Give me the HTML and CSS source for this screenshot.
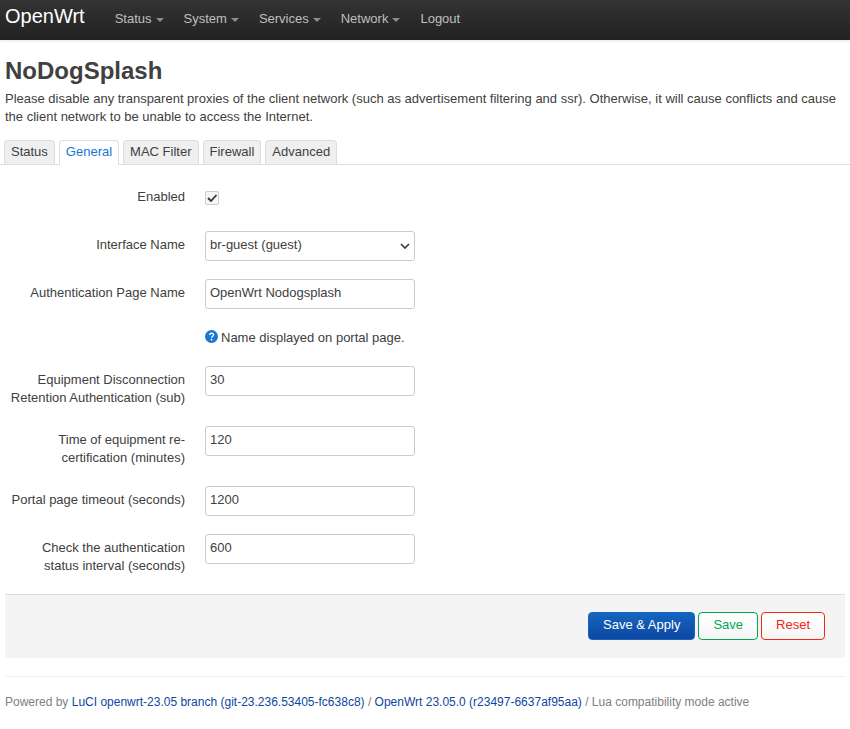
FILE: index.html
```html
<!DOCTYPE html>
<html lang="en">
<head>
<meta charset="utf-8">
<meta name="viewport" content="width=device-width, initial-scale=1">
<title>OpenWrt - NoDogSplash</title>
<link rel="stylesheet" href="styles.css">
</head>
<body>
<header class="topbar">
  <a class="brand" href="#">OpenWrt</a>
  <nav class="nav">
    <a class="menu" href="#">Status</a>
    <a class="menu" href="#">System</a>
    <a class="menu" href="#">Services</a>
    <a class="menu" href="#">Network</a>
    <a href="#">Logout</a>
  </nav>
</header>
<main>
  <h1>NoDogSplash</h1>
  <p class="intro">Please disable any transparent proxies of the client network (such as advertisement filtering and ssr). Otherwise, it will cause conflicts and cause the client network to be unable to access the Internet.</p>
  <nav class="tabs">
    <a href="#">Status</a>
    <a class="active" href="#">General</a>
    <a href="#">MAC Filter</a>
    <a href="#">Firewall</a>
    <a href="#">Advanced</a>
  </nav>
  <form>
    <div class="fields">
      <div class="row">
        <label for="enabled">Enabled</label>
        <div class="value check"><input type="checkbox" id="enabled" checked></div>
      </div>
      <div class="row">
        <label for="iface">Interface Name</label>
        <div class="value"><select class="control" id="iface"><option>br-guest (guest)</option></select></div>
      </div>
      <div class="row">
        <label for="page">Authentication Page Name</label>
        <div class="value">
          <input class="control" type="text" id="page" value="OpenWrt Nodogsplash">
          <div class="hint">
            <svg width="14" height="14" viewBox="0 0 14 14" aria-hidden="true"><circle cx="6.5" cy="6.5" r="6.5" fill="#1976d2"/><path d="M4.7 5.1C4.7 2.6 8.5 2.6 8.5 4.8C8.5 6.2 6.6 6.2 6.6 7.8" fill="none" stroke="#fff" stroke-width="1.4"/><circle cx="6.6" cy="9.7" r=".9" fill="#fff"/></svg>
            <span>Name displayed on portal page.</span>
          </div>
        </div>
      </div>
      <div class="row">
        <label for="retention">Equipment Disconnection Retention Authentication (sub)</label>
        <div class="value"><input class="control" type="text" id="retention" value="30"></div>
      </div>
      <div class="row">
        <label for="recert">Time of equipment re-certification (minutes)</label>
        <div class="value"><input class="control" type="text" id="recert" value="120"></div>
      </div>
      <div class="row">
        <label for="timeout">Portal page timeout (seconds)</label>
        <div class="value"><input class="control" type="text" id="timeout" value="1200"></div>
      </div>
      <div class="row">
        <label for="interval">Check the authentication status interval (seconds)</label>
        <div class="value"><input class="control" type="text" id="interval" value="600"></div>
      </div>
    </div>
    <div class="actions">
      <button class="apply" type="button">Save &amp; Apply</button>
      <button class="save" type="button">Save</button>
      <button class="reset" type="button">Reset</button>
    </div>
  </form>
</main>
<footer>Powered by <a href="#">LuCI openwrt-23.05 branch (git-23.236.53405-fc638c8)</a> / <a href="#">OpenWrt 23.05.0 (r23497-6637af95aa)</a> / Lua compatibility mode active</footer>
</body>
</html>
```
FILE: styles.css
```css
* { box-sizing: border-box; }

body {
  margin: 0;
  background: #fff;
  color: #404040;
  font: 13px/18px "Liberation Sans", Arial, sans-serif;
}

a { color: #0d47a1; text-decoration: none; }

.topbar {
  display: flex;
  height: 40px;
  padding: 0 5px;
  background: linear-gradient(#333, #222);
  box-shadow: 0 1px 3px rgba(0, 0, 0, .1);
}

.brand { padding-right: 20px; color: #fff; font-size: 20px; line-height: 32px; }

.nav { display: flex; }
.nav a { padding: 0 10px; color: #bfbfbf; line-height: 37px; }
.nav .menu::after {
  content: "";
  display: inline-block;
  margin-left: 4px;
  border: 4px solid transparent;
  border-top-color: #8c8c8c;
  border-bottom: 0;
  vertical-align: middle;
}

h1 { margin: 13px 5px 1px; font-size: 24px; line-height: 36px; }
.intro { margin: 0 5px; }

.tabs {
  display: flex;
  gap: 4px;
  margin-top: 14px;
  padding: 0 4px;
  border-bottom: 1px solid #ddd;
}
.tabs a {
  padding: 2px 6px 3px;
  border: 1px solid #ddd;
  border-bottom: 0;
  border-radius: 4px 4px 0 0;
  background: #efefef;
  color: #404040;
}
.tabs .active { margin-bottom: -1px; background: #fff; color: #1976d2; }

.fields {
  display: flex;
  flex-direction: column;
  gap: 18px;
  padding: 18px 5px;
}
.row { display: flex; gap: 20px; min-height: 30px; }
.row > label { flex: 0 0 180px; padding-top: 5px; text-align: right; }
.row:nth-child(n+4) > label { padding-bottom: 1px; }

.control {
  display: block;
  width: 210px;
  height: 30px;
  margin: 0;
  padding: 2px 4px 6px;
  border: 1px solid #ccc;
  border-radius: 3px;
  background: #fff;
  color: #404040;
  font: inherit;
}
select.control {
  appearance: none;
  padding: 3px 4px 5px;
  background: #fff url("data:image/svg+xml,%3Csvg xmlns='http://www.w3.org/2000/svg' width='10' height='8'%3E%3Cpath d='M1 2l4 4 4-4' fill='none' stroke='%23404040' stroke-width='1.7'/%3E%3C/svg%3E") no-repeat right 4px center;
}

.check { padding-top: 8px; }
.check input {
  appearance: none;
  display: block;
  width: 14px;
  height: 14px;
  margin: 0;
  border: 1px solid #ccc;
  border-radius: 2px;
  background: #f6f6f6;
}
.check input:checked {
  background-image: url("data:image/svg+xml,%3Csvg xmlns='http://www.w3.org/2000/svg' width='12' height='12'%3E%3Cpath d='M2 6l3 3 5.500-6' fill='none' stroke='%23333' stroke-width='1.8'/%3E%3C/svg%3E");
}

.hint { display: flex; gap: 2px; margin-top: 20px; padding-bottom: 1px; }
.hint svg { margin-top: 1px; }

.actions {
  display: flex;
  justify-content: flex-end;
  gap: 3px;
  margin: 0 5px 18px;
  padding: 17px 20px 18px;
  border-top: 1px solid #ddd;
  border-radius: 0 0 3px 3px;
  background: #f4f4f4;
}
button {
  height: 28px;
  padding: 3px 14px 5px;
  border: 1px solid;
  border-radius: 4px;
  background: linear-gradient(#fff 25%, #f4f4f4);
  font: inherit;
}
.apply { border-color: #1565c0; background: linear-gradient(#1565c0, #0d47a1); color: #fff; }
.save { color: #00a854; }
.reset { color: #f22613; }

footer {
  margin: 0 5px;
  padding: 16px 0;
  border-top: 1px solid #eee;
  color: #808080;
  font-size: 12px;
}
```
